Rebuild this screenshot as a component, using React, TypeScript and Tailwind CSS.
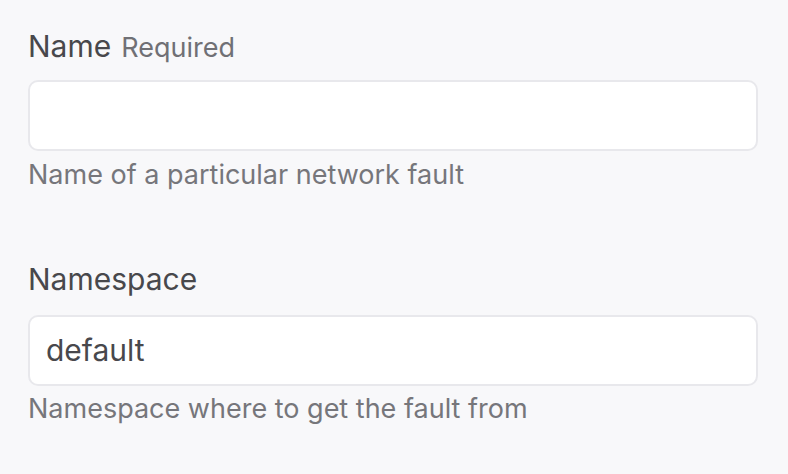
import React from "react";

export default function App() {
  return (
    <div
      className="w-[788px] h-[474px] bg-[#f8f8fa] pl-[28px] pr-[30px] pt-[28px]"
      style={{ fontFamily: "Inter, 'Noto Sans', sans-serif" }}
    >
      <div className="flex items-baseline gap-[10px] leading-[36px] h-[36px]">
        <span className="text-[30px] text-[#48484c]">Name</span>
        <span className="text-[27px] text-[#707075]">Required</span>
      </div>
      <div className="mt-[16px] h-[71px] rounded-[10px] border-2 border-[#e8e8ec] bg-white" />
      <div className="mt-[8px] text-[27px] leading-[32px] text-[#76767b]">
        Name of a particular network fault
      </div>
      <div className="mt-[70px] text-[30px] leading-[36px] text-[#48484c]">Namespace</div>
      <div className="mt-[18px] h-[71px] rounded-[10px] border-2 border-[#e8e8ec] bg-white flex items-center pl-[16px]">
        <span className="text-[30px] text-[#48484c]">default</span>
      </div>
      <div className="mt-[7px] text-[27px] leading-[32px] text-[#76767b]">
        Namespace where to get the fault from
      </div>
    </div>
  );
}
